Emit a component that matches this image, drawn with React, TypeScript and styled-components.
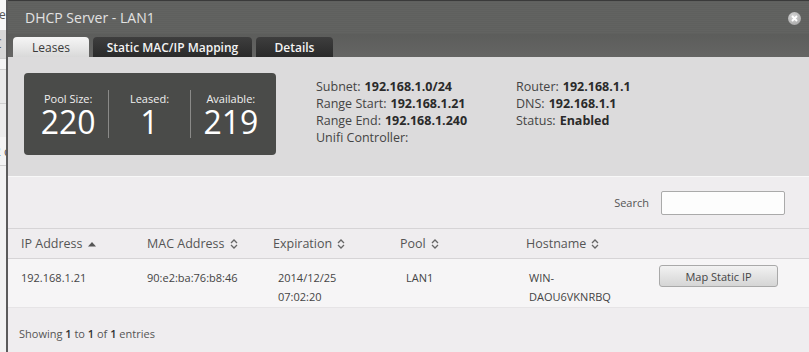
import styled, { createGlobalStyle } from 'styled-components'

const GlobalStyle = createGlobalStyle`
  html, body {
    margin: 0;
    padding: 0;
    width: 809px;
    height: 352px;
    overflow: hidden;
    background: #f2f2f2;
    font-family: 'Open Sans', 'Noto Sans', sans-serif;
  }
`

const Page = styled.div`
  display: flex;
  width: 809px;
  height: 352px;
  overflow: hidden;
`

const BehindStrip = styled.div`
  width: 6px;
  flex: none;
  display: flex;
  flex-direction: column;
  background: #f4f4f4;
  font-size: 12px;
  color: #555;
  overflow: hidden;
  white-space: nowrap;
`

const BehindRow = styled.div<{ $h: number; $bg: string; $line?: boolean }>`
  height: ${({ $h }) => $h}px;
  background: ${({ $bg }) => $bg};
  border-bottom: ${({ $line }) => ($line ? '1px solid #cfcfcf' : 'none')};
  display: flex;
  align-items: center;
  text-indent: -6px;
`

const Dialog = styled.div`
  flex: 1;
  display: flex;
  flex-direction: column;
  border-left: 2px solid #5b5b5b;
  min-width: 0;
`

const TitleBar = styled.div`
  height: 33px;
  border-top: 1px solid #3a3a3a;
  display: flex;
  align-items: center;
  justify-content: space-between;
  padding: 0 8px 0 17px;
  background: repeating-linear-gradient(#5f605e 0 1px, #626361 1px 2px);
  color: #e2e2e2;
  font-size: 14px;
`

const CloseButton = styled.div`
  width: 13px;
  height: 13px;
  border-radius: 50%;
  background: radial-gradient(circle at 40% 35%, #d8d8d8, #9a9a9a);
  display: flex;
  align-items: center;
  justify-content: center;
  margin-top: 1px;
`

const TabBar = styled.div`
  height: 23px;
  display: flex;
  align-items: flex-end;
  gap: 4px;
  padding-left: 5px;
  background: linear-gradient(#5c5d5b, #656564);
`

const Tab = styled.div<{ $active?: boolean; $w: number }>`
  width: ${({ $w }) => $w}px;
  height: 20px;
  border-radius: 4px 4px 0 0;
  display: flex;
  align-items: center;
  justify-content: center;
  font-size: 12px;
  font-weight: ${({ $active }) => ($active ? 400 : 600)};
  color: ${({ $active }) => ($active ? '#3a3a3a' : '#f4f4f4')};
  background: ${({ $active }) =>
    $active ? 'linear-gradient(#f6f6f6, #d9d9d9)' : 'linear-gradient(#3e3e3e, #2a2a2a)'};
`

const Summary = styled.div`
  height: 120px;
  box-sizing: border-box;
  background: #dcdbdc;
  border-bottom: 1px solid #f8f8f8;
  display: flex;
  padding: 16px 0 0 16px;
`

const StatPanel = styled.div`
  width: 252px;
  height: 82px;
  box-sizing: border-box;
  background: #4a4b49;
  border-radius: 4px;
  display: flex;
  padding: 17px 5px 0 4px;
`

const Stat = styled.div<{ $divider?: boolean }>`
  width: 81px;
  height: 48px;
  border-left: ${({ $divider }) => ($divider ? '1px solid #8a8a88' : 'none')};
  display: flex;
  flex-direction: column;
  align-items: center;
  color: #fff;
`

const StatLabel = styled.div`
  font-size: 11px;
  line-height: 13px;
  margin-top: 2px;
  color: #f0f0f0;
`

const StatValue = styled.div`
  font-size: 32px;
  line-height: 30px;
  margin-top: 2px;
`

const InfoCol = styled.div<{ $w: number }>`
  width: ${({ $w }) => $w}px;
  display: flex;
  flex-direction: column;
  padding-top: 5px;
  font-size: 12.5px;
  line-height: 17px;
  color: #444;
`

const InfoLine = styled.div`
  white-space: nowrap;
  b {
    color: #2a2a2a;
    font-weight: 700;
    margin-left: 4px;
  }
`

const TableArea = styled.div`
  flex: 1;
  background: #efedef;
  display: flex;
  flex-direction: column;
`

const SearchRow = styled.div`
  height: 51px;
  display: flex;
  align-items: center;
  justify-content: flex-end;
  gap: 12px;
  padding-right: 24px;
  font-size: 11px;
  color: #555;
`

const SearchInput = styled.div`
  width: 122px;
  height: 22px;
  border: 1px solid #aaa;
  border-radius: 2px;
  background: #fdfdfd;
  margin-top: 1px;
`

const Grid = styled.div`
  display: grid;
  grid-template-columns: 126px 126px 127px 126px 133px 1fr;
  padding-left: 13px;
`

const HeadRow = styled(Grid)`
  height: 29px;
  border-top: 1px solid #d6d4d6;
  border-bottom: 1px solid #d6d4d6;
  align-items: center;
  font-size: 12.5px;
  color: #555;
`

const HeadCell = styled.div`
  display: flex;
  align-items: center;
  gap: 5px;
`

const BodyRow = styled(Grid)`
  height: 49px;
  background: #f6f5f6;
  border-bottom: 1px solid #e6e4e6;
  font-size: 11px;
  line-height: 19px;
  color: #444;
  padding-top: 9px;
  box-sizing: border-box;
`

const Cell = styled.div<{ $dx?: number }>`
  padding-left: ${({ $dx }) => $dx ?? 0}px;
`

const MapButton = styled.div`
  width: 117px;
  height: 20px;
  margin-top: -3px;
  border: 1px solid #a9a9a9;
  border-radius: 3px;
  background: linear-gradient(#f2f2f2, #d5d5d5);
  display: flex;
  align-items: center;
  justify-content: center;
  font-size: 11px;
  color: #444;
`

const Footer = styled.div`
  padding: 18px 0 0 11px;
  font-size: 11px;
  color: #555;
  b {
    font-weight: 600;
    color: #333;
  }
`

const SortBoth = () => (
  <svg width="8" height="10" viewBox="0 0 8 10">
    <path d="M1 4 L4 1 L7 4 M1 6 L4 9 L7 6" fill="none" stroke="#666" strokeWidth="1.3" />
  </svg>
)

const SortUp = () => (
  <svg width="8" height="6" viewBox="0 0 8 6">
    <path d="M0 5.5 L4 1 L8 5.5 Z" fill="#555" />
  </svg>
)

const columns = ['IP Address', 'MAC Address', 'Expiration', 'Pool', 'Hostname']

export default function App() {
  return (
    <Page>
      <GlobalStyle />
      <BehindStrip>
        <BehindRow $h={30} $bg="#f7f7f7">re</BehindRow>
        <BehindRow $h={29} $bg="#d8d8d8" $line>C</BehindRow>
        <BehindRow $h={10} $bg="#f4f4f4" $line />
        <BehindRow $h={33} $bg="#e9e9e9" $line />
        <BehindRow $h={34} $bg="#ececec" />
        <BehindRow $h={28} $bg="#f4f4f4" $line>2 c</BehindRow>
        <BehindRow $h={188} $bg="#f2f2f2" />
      </BehindStrip>
      <Dialog>
        <TitleBar>
          DHCP Server - LAN1
          <CloseButton>
            <svg width="7" height="7" viewBox="0 0 7 7">
              <path d="M1 1 L6 6 M6 1 L1 6" stroke="#fff" strokeWidth="1.8" />
            </svg>
          </CloseButton>
        </TitleBar>
        <TabBar>
          <Tab $active $w={76}>Leases</Tab>
          <Tab $w={159}>Static MAC/IP Mapping</Tab>
          <Tab $w={77}>Details</Tab>
        </TabBar>
        <Summary>
          <StatPanel>
            <Stat>
              <StatLabel>Pool Size:</StatLabel>
              <StatValue>220</StatValue>
            </Stat>
            <Stat $divider>
              <StatLabel>Leased:</StatLabel>
              <StatValue>1</StatValue>
            </Stat>
            <Stat $divider>
              <StatLabel>Available:</StatLabel>
              <StatValue>219</StatValue>
            </Stat>
          </StatPanel>
          <InfoCol $w={240} style={{ marginLeft: 40 }}>
            <InfoLine>Subnet:<b>192.168.1.0/24</b></InfoLine>
            <InfoLine>Range Start:<b>192.168.1.21</b></InfoLine>
            <InfoLine>Range End:<b>192.168.1.240</b></InfoLine>
            <InfoLine>Unifi Controller:</InfoLine>
          </InfoCol>
          <InfoCol $w={200} style={{ marginLeft: -40 }}>
            <InfoLine>Router:<b>192.168.1.1</b></InfoLine>
            <InfoLine>DNS:<b>192.168.1.1</b></InfoLine>
            <InfoLine>Status:<b>Enabled</b></InfoLine>
          </InfoCol>
        </Summary>
        <TableArea>
          <SearchRow>
            Search
            <SearchInput />
          </SearchRow>
          <HeadRow>
            {columns.map((c, i) => (
              <HeadCell key={c}>
                {c}
                {i === 0 ? <SortUp /> : <SortBoth />}
              </HeadCell>
            ))}
          </HeadRow>
          <BodyRow>
            <Cell>192.168.1.21</Cell>
            <Cell $dx={-6}>90:e2:ba:76:b8:46</Cell>
            <Cell $dx={5}>2014/12/25<br />07:02:20</Cell>
            <Cell $dx={6}>LAN1</Cell>
            <Cell $dx={3}>WIN-<br />DAOU6VKNRBQ</Cell>
            <Cell>
              <MapButton>Map Static IP</MapButton>
            </Cell>
          </BodyRow>
          <Footer>
            Showing <b>1</b> to <b>1</b> of <b>1</b> entries
          </Footer>
        </TableArea>
      </Dialog>
    </Page>
  )
}
